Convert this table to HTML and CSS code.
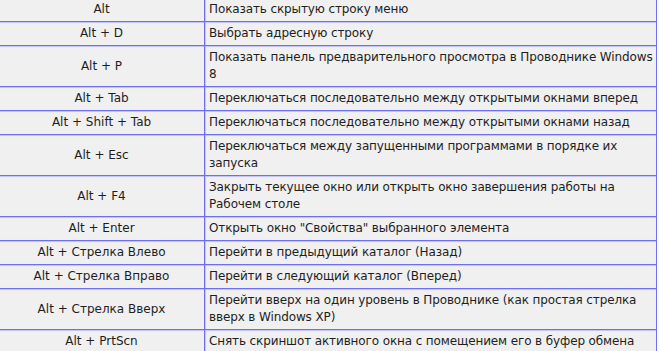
FILE: index.html
```html
<!DOCTYPE html>
<html lang="ru">
<head>
<meta charset="utf-8">
<link rel="stylesheet" href="styles.css">
</head>
<body>
<div class="wrap">
<table class="keys">
<tr><td class="k">Alt</td><td class="d">Показать скрытую строку меню</td></tr>
<tr><td class="k">Alt + D</td><td class="d">Выбрать адресную строку</td></tr>
<tr><td class="k">Alt + P</td><td class="d">Показать панель предварительного просмотра в Проводнике Windows 8</td></tr>
<tr><td class="k">Alt + Tab</td><td class="d">Переключаться последовательно между открытыми окнами вперед</td></tr>
<tr><td class="k">Alt + Shift + Tab</td><td class="d">Переключаться последовательно между открытыми окнами назад</td></tr>
<tr><td class="k">Alt + Esc</td><td class="d">Переключаться между запущенными программами в порядке их запуска</td></tr>
<tr><td class="k">Alt + F4</td><td class="d">Закрыть текущее окно или открыть окно завершения работы на Рабочем столе</td></tr>
<tr><td class="k">Alt + Enter</td><td class="d">Открыть окно "Свойства" выбранного элемента</td></tr>
<tr><td class="k">Alt + Стрелка Влево</td><td class="d">Перейти в предыдущий каталог (Назад)</td></tr>
<tr><td class="k">Alt + Стрелка Вправо</td><td class="d">Перейти в следующий каталог (Вперед)</td></tr>
<tr><td class="k">Alt + Стрелка Вверх</td><td class="d">Перейти вверх на один уровень в Проводнике (как простая стрелка вверх в Windows XP)</td></tr>
<tr><td class="k">Alt + PrtScn</td><td class="d">Снять скриншот активного окна с помещением его в буфер обмена</td></tr>
</table>
</div>
</body>
</html>
```

FILE: styles.css
```css
html, body {
  margin: 0;
  padding: 0;
  background: #ffffff;
}
.wrap {
  margin-top: -3px;
  margin-left: -2px;
  width: 659px;
}
.keys {
  border-collapse: collapse;
  width: 659px;
  table-layout: fixed;
  font-family: "DejaVu Sans", Verdana, sans-serif;
  font-size: 12px;
  line-height: 17px;
  color: #1e1e1e;
}
.keys td {
  background: #f0f0f0;
  border: 1px solid #6e6ef2;
  box-shadow: inset 0 1px 0 #c4c4f7, inset 1px 0 0 #c4c4f7;
  padding: 3px 0 3px 4px;
  vertical-align: middle;
}
.keys td.k {
  width: 205px;
  padding-left: 0;
  text-align: center;
}
.keys td.d {
  text-align: left;
  letter-spacing: -0.12px;
}
```
